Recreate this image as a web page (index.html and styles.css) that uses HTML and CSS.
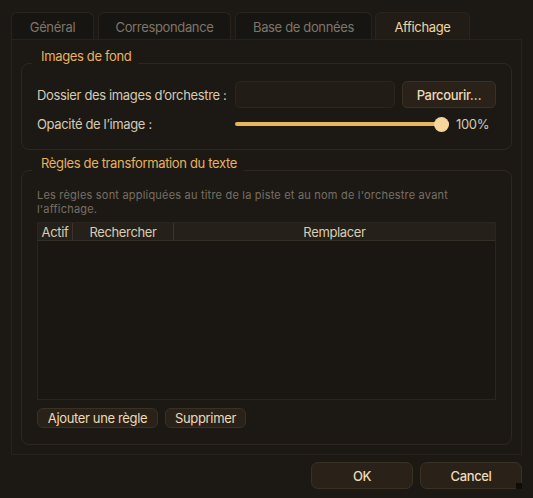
FILE: index.html
```html
<!DOCTYPE html>
<html lang="fr">
<head>
<meta charset="utf-8">
<title>Préférences</title>
<link rel="stylesheet" href="styles.css">
</head>
<body>
<div class="dialog">
  <div class="tabs">
    <div class="tab t1">Général</div>
    <div class="tab t2">Correspondance</div>
    <div class="tab t3">Base de données</div>
    <div class="tab t4 active">Affichage</div>
  </div>
  <div class="pane">
    <fieldset class="group g1">
      <legend>Images de fond</legend>
      <div class="row">
        <span class="label">Dossier des images d’orchestre :</span>
        <div class="input"></div>
        <button class="btn browse">Parcourir…</button>
      </div>
      <div class="row slider-row">
        <span class="label">Opacité de l’image :</span>
        <div class="slider"><div class="track"></div><div class="thumb"></div></div>
        <span class="value">100%</span>
      </div>
    </fieldset>
    <fieldset class="group g2">
      <legend>Règles de transformation du texte</legend>
      <p class="desc">Les règles sont appliquées au titre de la piste et au nom de l'orchestre avant l'affichage.</p>
      <div class="table">
        <div class="thead">
          <div class="th c1">Actif</div>
          <div class="th c2">Rechercher</div>
          <div class="th c3">Remplacer</div>
        </div>
        <div class="tbody"></div>
      </div>
      <div class="actions">
        <button class="btn small">Ajouter une règle</button>
        <button class="btn small">Supprimer</button>
      </div>
    </fieldset>
  </div>
  <div class="footer">
    <button class="btn big">OK</button>
    <button class="btn big">Cancel</button>
    <span class="grip"></span>
  </div>
</div>
</body>
</html>
```
FILE: styles.css
```css
* { box-sizing: border-box; }
html, body { margin: 0; padding: 0; }
body {
  background: #1c1915;
  font-family: Inter, "Noto Sans", sans-serif;
  font-size: 13px;
  letter-spacing: -0.35px;
  color: #d9cdb6;
  width: 533px;
  height: 498px;
  overflow: hidden;
  white-space: nowrap;
}
.dialog {
  position: relative;
  padding: 12px 11px 0 11px;
}
.tabs {
  display: flex;
  height: 27px;
  gap: 4px;
}
.tab {
  height: 27px;
  border: 1px solid #28231d;
  border-bottom: none;
  border-radius: 6px 6px 0 0;
  background: #171511;
  color: #7d756a;
  display: flex;
  align-items: center;
  justify-content: center;
  font-size: 13px;
  padding-top: 1px;
}
.t1 { width: 83px; }
.t2 { width: 133px; }
.t3 { width: 137px; }
.t4 { width: 95px; margin-left: -1px; }
.tab.active {
  background: #221c16;
  color: #ead6a6;
  border-color: #2a241c;
}
.pane {
  width: 511px;
  height: 416px;
  border: 1px solid #27221b;
  padding: 9px 9px 9px 9px;
  display: flex;
  flex-direction: column;
  gap: 6px;
}
.group {
  margin: 0;
  border: 1px solid #2d271f;
  border-radius: 8px;
  padding: 0 15px;
  min-width: 0;
}
.group legend {
  color: #e8b25c;
  font-size: 13px;
  line-height: 14px;
  padding: 0 7px 14px 9px;
  margin-left: -5px;
}
.g1 { padding-top: 4px; padding-bottom: 17px; }
.g2 { padding-top: 3px; padding-bottom: 16px; flex: 1; display: flex; flex-direction: column; min-height: 0; }
.g2 legend { padding-bottom: 15px; }
.row {
  display: flex;
  align-items: center;
  height: 27px;
}
.slider-row { height: 16px; margin-top: 8px; }
.label { width: 198px; flex: none; color: #d6cab3; }
.input {
  width: 160px;
  height: 27px;
  background: #221c16;
  border: 1px solid #2d261e;
  border-radius: 5px;
}
.btn {
  font-family: inherit;
  font-size: 13px;
  letter-spacing: -0.35px;
  background: #2a2219;
  border: 1px solid #3a3124;
  color: #eadbb9;
  border-radius: 5px;
  padding: 0;
  cursor: pointer;
  white-space: nowrap;
}
.browse { width: 94px; height: 27px; margin-left: 7px; font-weight: 500; }
.slider {
  position: relative;
  width: 214px;
  height: 16px;
  display: flex;
  align-items: center;
}
.track {
  width: 100%;
  height: 4px;
  border-radius: 2px;
  background: #e8b45f;
}
.thumb {
  position: absolute;
  right: 0;
  top: 0.5px;
  width: 15px;
  height: 15px;
  border-radius: 50%;
  background: #f5d79b;
}
.value { margin-left: 7px; color: #d6cab3; }
.desc {
  margin: 0;
  font-size: 11px;
  line-height: 14px;
  letter-spacing: 0.2px;
  color: #776f64;
  white-space: normal;
}
.table {
  margin-top: 6px;
  flex: 1;
  min-height: 0;
  display: flex;
  flex-direction: column;
  border: 1px solid #2a251e;
  background: #1a1713;
}
.thead {
  display: flex;
  height: 18px;
  flex: none;
  background: #252019;
  border-bottom: 1px solid #342e25;
}
.th {
  display: flex;
  align-items: center;
  justify-content: center;
  color: #d8ccb5;
  font-size: 13px;
  line-height: 16px;
}
.c1 { width: 35px; border-right: 1px solid #3b342a; }
.c2 { width: 101px; border-right: 1px solid #3b342a; }
.c3 { flex: 1; }
.tbody { flex: 1; }
.actions {
  display: flex;
  gap: 7px;
  margin-top: 8px;
  flex: none;
}
.small { height: 20px; padding: 0 8px; border-radius: 6px; }
.actions .small:first-child { width: 121px; }
.actions .small:last-child { width: 81px; }
.footer {
  display: flex;
  justify-content: flex-end;
  gap: 7px;
  margin-top: 7px;
  position: relative;
}
.big { width: 102px; height: 27px; border-radius: 7px; font-weight: 500; }
.grip {
  position: absolute;
  right: 0;
  bottom: 0;
  width: 6px;
  height: 6px;
  background: #0f0d0b;
}
```
